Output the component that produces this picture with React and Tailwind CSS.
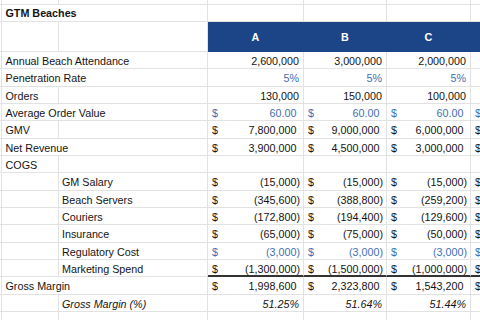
import clsx from "clsx";

const GRID = "grid grid-cols-[2px_57px_149px_96px_83px_84px_84px]";
const GRIDLINE = "border-r border-b border-r-[#e2e2e2] border-b-[#e2e2e2]";
const BLUE_TEXT = "text-[#3f6fb2]";

// last column is cut by the window edge, only its "$" shows
const rows = [
  { label: "Annual Beach Attendance", span: true, type: "num", vals: ["2,600,000", "3,000,000", "2,000,000", ""] },
  { label: "Penetration Rate", span: true, type: "num", blue: true, vals: ["5%", "5%", "5%", ""] },
  { label: "Orders", type: "num", vals: ["130,000", "150,000", "100,000", ""] },
  { label: "Average Order Value", span: true, type: "acc", blue: true, vals: ["60.00", "60.00", "60.00", ""] },
  { label: "GMV", type: "acc", vals: ["7,800,000", "9,000,000", "6,000,000", ""] },
  { label: "Net Revenue", span: true, type: "acc", vals: ["3,900,000", "4,500,000", "3,000,000", ""] },
  { label: "COGS", type: "empty", vals: ["", "", "", ""] },
  { label: "GM Salary", indent: true, type: "acc", vals: ["(15,000)", "(15,000)", "(15,000)", ""] },
  { label: "Beach Servers", indent: true, type: "acc", vals: ["(345,600)", "(388,800)", "(259,200)", ""] },
  { label: "Couriers", indent: true, type: "acc", vals: ["(172,800)", "(194,400)", "(129,600)", ""] },
  { label: "Insurance", indent: true, type: "acc", vals: ["(65,000)", "(75,000)", "(50,000)", ""] },
  { label: "Regulatory Cost", indent: true, type: "acc", blue: true, vals: ["(3,000)", "(3,000)", "(3,000)", ""] },
  { label: "Marketing Spend", indent: true, type: "acc", underline: true, vals: ["(1,300,000)", "(1,500,000)", "(1,000,000)", ""] },
  { label: "Gross Margin", span: true, type: "acc", vals: ["1,998,600", "2,323,800", "1,543,200", ""] },
  { label: "Gross Margin (%)", indent: true, italic: true, type: "num", vals: ["51.25%", "51.64%", "51.44%", ""] },
];

function Cell({ className, children }) {
  return (
    <div className={clsx(GRIDLINE, "overflow-visible whitespace-nowrap", className)}>
      {children}
    </div>
  );
}

function ValueCell({ row, value }) {
  const line = row.underline
    ? "border-r border-r-[#e2e2e2] border-b-2 border-b-[#333333]"
    : GRIDLINE;
  const color = row.blue ? BLUE_TEXT : "";

  if (row.type === "acc") {
    const negative = value.startsWith("(");
    return (
      <div className={clsx(line, "flex justify-between overflow-hidden whitespace-nowrap pl-[4px] pr-[3px] pt-[3px]", color)}>
        <span>$</span>
        {value && (
          <span>
            {value}
            {!negative && <span className="invisible">)</span>}
          </span>
        )}
      </div>
    );
  }

  return (
    <div className={clsx(line, "overflow-hidden whitespace-nowrap text-right pr-[4px] pt-[3px]", color, row.italic && "italic")}>
      {value}
    </div>
  );
}

function DataRow({ row }) {
  return (
    <div className={clsx(GRID, "h-[17.35px]")}>
      <Cell />
      {row.span ? (
        <Cell className="col-span-2 pl-[3.5px] pt-[3px]">{row.label}</Cell>
      ) : row.indent ? (
        <>
          <Cell />
          <Cell className={clsx("pl-[3px] pt-[3px]", row.italic && "italic")}>{row.label}</Cell>
        </>
      ) : (
        <>
          <Cell className="pl-[3.5px] pt-[3px]">{row.label}</Cell>
          <Cell />
        </>
      )}
      {row.vals.map((v, i) => (
        <ValueCell key={i} row={row} value={v} />
      ))}
    </div>
  );
}

function EmptyRow({ h }) {
  return (
    <div className={clsx(GRID, h)}>
      {[0, 1, 2, 3, 4, 5, 6].map((i) => (
        <Cell key={i} />
      ))}
    </div>
  );
}

export default function App() {
  const header = "bg-[#1c4587] border-r border-b border-r-[#1c4587] border-b-[#1c4587] flex items-center justify-center pt-[2px] font-bold text-white";

  return (
    <div className="w-[480px] h-[320px] overflow-hidden bg-white text-[10.75px] leading-[13px] text-[#141414] font-['Liberation_Sans',Arial,sans-serif]">
      <EmptyRow h="h-[5px]" />

      <div className={clsx(GRID, "h-[17px]")}>
        <Cell />
        <Cell className="col-span-2 pl-[3.5px] pt-[1.5px] font-bold">GTM Beaches</Cell>
        <Cell />
        <Cell />
        <Cell />
        <Cell />
      </div>

      <div className={clsx(GRID, "h-[30px]")}>
        <Cell />
        <Cell />
        <Cell />
        <div className={header}>A</div>
        <div className={header}>B</div>
        <div className={header}>C</div>
        <div className={header} />
      </div>

      {rows.map((row) => (
        <DataRow key={row.label} row={row} />
      ))}

      <EmptyRow h="h-[17.35px]" />
    </div>
  );
}
